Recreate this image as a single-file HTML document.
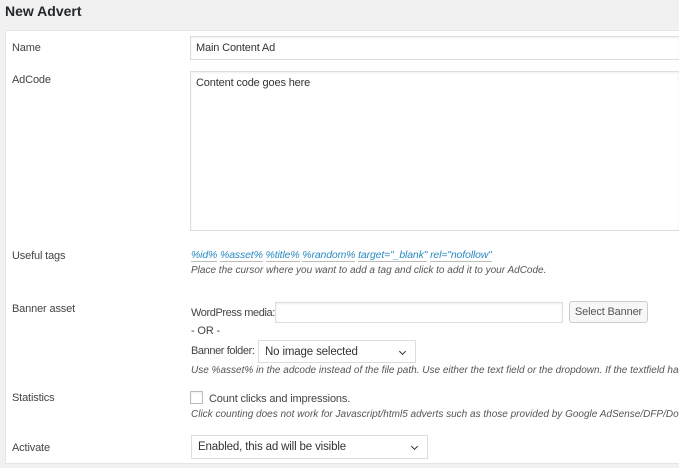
<!DOCTYPE html>
<html><head><style>
body{margin:0;width:679px;height:468px;background:#f1f1f1;font-family:"Liberation Sans",sans-serif;font-size:11px;letter-spacing:-0.15px;color:#444;position:relative;overflow:hidden}
.a{position:absolute;white-space:nowrap}
.panel{position:absolute;left:5px;top:30px;width:674px;height:434px;background:#fff;border:1px solid #e5e5e5;border-right:none;box-sizing:border-box}
.in{position:absolute;background:#fff;border:1px solid #ddd;box-shadow:inset 0 1px 2px rgba(0,0,0,.07);box-sizing:border-box}
.it{font-style:italic;color:#555;font-size:10px;letter-spacing:0}
.lk{color:#2a8bc1;font-style:italic;border-bottom:1px solid #bbb}
.sel{position:absolute;border:1px solid #ddd;background:#fff;box-sizing:border-box;padding:5px 6px;font-size:11.5px;color:#333}
.sel:after{content:"";position:absolute;right:10px;top:8px;width:4px;height:4px;border-right:1.5px solid #333;border-bottom:1.5px solid #333;transform:rotate(45deg)}
</style></head><body>
<div class="a" style="left:5px;top:3px;font-size:14px;font-weight:bold;color:#23282d;letter-spacing:0">New Advert</div>
<div class="panel"></div>
<div class="a" style="left:12px;top:42px">Name</div>
<div class="in" style="left:190px;top:36px;width:489px;height:24px;border-right:none"></div>
<div class="a" style="left:196px;top:42px;color:#333">Main Content Ad</div>
<div class="a" style="left:12px;top:74px">AdCode</div>
<div class="in" style="left:190px;top:71px;width:489px;height:160px;border-right:none"></div>
<div class="a" style="left:196px;top:77px;color:#333">Content code goes here</div>
<div class="a" style="left:12px;top:250px">Useful tags</div>
<div class="a" style="left:191px;top:249px;font-size:10.5px"><span class="lk">%id%</span> <span class="lk">%asset%</span> <span class="lk">%title%</span> <span class="lk">%random%</span> <span class="lk">target="_blank"</span> <span class="lk">rel="nofollow"</span></div>
<div class="a it" style="left:191px;top:265px">Place the cursor where you want to add a tag and click to add it to your AdCode.</div>
<div class="a" style="left:12px;top:303px">Banner asset</div>
<div class="a" style="left:191px;top:307px;letter-spacing:-0.4px">WordPress media:</div>
<div class="in" style="left:275px;top:302px;width:288px;height:21px"></div>
<div class="a" style="left:569px;top:301px;width:79px;height:22px;border:1px solid #ccc;border-radius:3px;background:#f7f7f7;box-sizing:border-box;text-align:center;line-height:20px;color:#555">Select Banner</div>
<div class="a" style="left:191px;top:325px">- OR -</div>
<div class="a" style="left:191px;top:345px;letter-spacing:-0.4px">Banner folder:</div>
<div class="sel" style="left:258px;top:340px;width:158px;height:23px">No image selected</div>
<div class="a it" style="left:191px;top:365px">Use %asset% in the adcode instead of the file path. Use either the text field or the dropdown. If the textfield has</div>
<div class="a" style="left:12px;top:392px">Statistics</div>
<div class="in" style="left:190px;top:391px;width:13px;height:13px;border-color:#bbb"></div>
<div class="a" style="left:209px;top:393px">Count clicks and impressions.</div>
<div class="a it" style="left:191px;top:409px">Click counting does not work for Javascript/html5 adverts such as those provided by Google AdSense/DFP/Dou</div>
<div class="a" style="left:12px;top:442px">Activate</div>
<div class="sel" style="left:191px;top:435px;width:237px;height:24px">Enabled, this ad will be visible</div>
</body></html>
